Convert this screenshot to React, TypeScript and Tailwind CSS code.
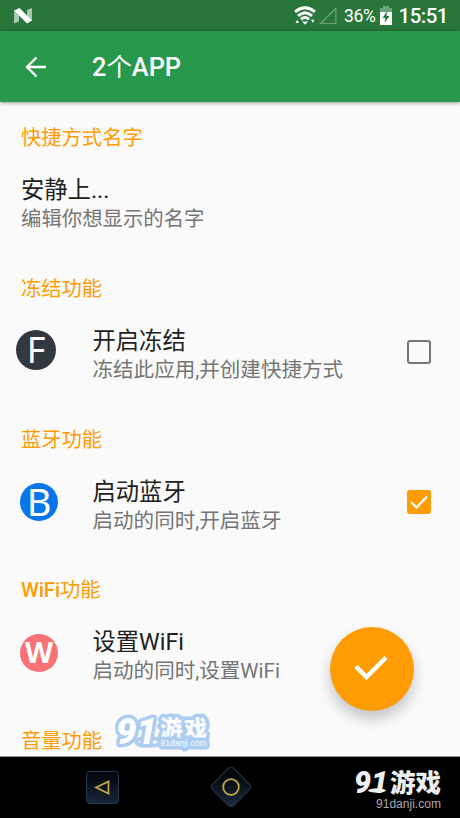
import { useState } from "react"
import clsx from "clsx"

interface Feature {
  id: string
  section: string
  sectionMedium?: boolean
  title: string
  summary: string
  badge: {
    letter: string
    className: string
    letterClassName: string
  }
  checkable?: boolean
}

const features: Feature[] = [
  {
    id: "freeze",
    section: "冻结功能",
    title: "开启冻结",
    summary: "冻结此应用,并创建快捷方式",
    badge: {
      letter: "F",
      className: "ml-4 mb-[11px] size-10 bg-[#323740]",
      letterClassName: "text-[36px] leading-[38px]",
    },
    checkable: true,
  },
  {
    id: "bluetooth",
    section: "蓝牙功能",
    title: "启动蓝牙",
    summary: "启动的同时,开启蓝牙",
    badge: {
      letter: "B",
      className: "ml-5 mb-[7px] size-[38px] bg-[#0676e8]",
      letterClassName: "mb-[2px] text-[38px] leading-[38px]",
    },
    checkable: true,
  },
  {
    id: "wifi",
    section: "WiFi功能",
    sectionMedium: true,
    title: "设置WiFi",
    summary: "启动的同时,设置WiFi",
    badge: {
      letter: "W",
      className: "ml-5 mb-[7px] size-[38px] bg-[#fb7276]",
      letterClassName: "mb-px text-[29px] leading-[38px] font-bold",
    },
  },
]

function StatusBar() {
  return (
    <div className="flex h-[31px] shrink-0 items-center bg-[#28763a] pl-[14px] pr-3 text-white">
      <svg width="18" height="16" viewBox="0 0 18 16" className="mt-px">
        <path d="M0 3l5 4v6.500l-5 2z" fill="#a9c8b0" />
        <path d="M18 0v13l-5-4v-7z" fill="#a9c8b0" />
        <path d="M0 2.500L5.500 0 18 12.500 13 15.500z" fill="#fff" />
      </svg>
      <div className="ml-auto flex items-center">
        <svg width="22" height="20" viewBox="0 0 22 20" fill="none" stroke="#fff" strokeWidth="2.900">
          <path d="M1 5.800Q11-2.400 21 5.800" />
          <path d="M4 9.800Q11 3.600 18 9.800" />
          <path d="M7 13.400Q11 9.600 15 13.400" />
          <path d="M8 15.400h6L11 18.800z" fill="#fff" stroke="none" />
          <path d="M1.500 17l1.800-3.200L5 17zM17 13.800h3.600L18.800 17z" fill="#fff" stroke="none" />
        </svg>
        <svg width="18" height="18" viewBox="0 0 18 18" fill="none" className="ml-[3px]">
          <path d="M1.500 16.500H16.900V1.200z" stroke="#6ea47a" strokeWidth="1.200" />
        </svg>
        <span className="ml-[7px] mt-[2px] text-[17.500px] leading-none tracking-[-0.300px]">36%</span>
        <svg width="12" height="19" viewBox="0 0 12 19" className="ml-[5px]">
          <path d="M3 0h6v2h3v4H0V2h3z" fill="#6ea47a" />
          <path d="M0 6h12v13H0z" fill="#fff" />
          <path d="M7.500 5L2.500 12h3L4.500 17 9.500 10h-3z" fill="#28763a" />
        </svg>
        <span className="ml-[6px] mt-[2px] text-[20.500px] font-medium leading-none tracking-[-0.500px]">15:51</span>
      </div>
    </div>
  )
}

function Checkbox({ checked, onChange, label }: { checked: boolean; onChange: () => void; label: string }) {
  return (
    <button
      role="checkbox"
      aria-checked={checked}
      aria-label={label}
      onClick={onChange}
      className={clsx(
        "mb-[7px] mr-[29px] flex size-6 items-center justify-center rounded-[3px]",
        checked ? "bg-[#ff9c04]" : "border-2 border-[#757575]"
      )}
    >
      {checked && (
        <svg width="20" height="16" viewBox="0 0 20 16" fill="none" stroke="#fafafa" strokeWidth="2.400">
          <path d="M2 8l5.500 5.500L18 2.500" />
        </svg>
      )}
    </button>
  )
}

function BrandMark({ blue }: { blue?: boolean }) {
  const outline = blue
    ? { stroke: "#acccf0", strokeWidth: 7, strokeLinejoin: "round" as const, paintOrder: "stroke" }
    : {}

  return (
    <svg width="98" height="42" viewBox="0 0 98 42" fill={blue ? "#fcfdff" : "#eee"} className="block overflow-visible">
      {/* Numerals, the second one standing on a small dish */}
      <g {...outline}>
        <ellipse cx={blue ? 36 : 32} cy={blue ? 31 : 24.5} rx={blue ? 10 : 9} ry="2.200" />
        <text
          x={blue ? 4 : 9}
          y={blue ? 33 : 26.5}
          fontSize={blue ? 37 : 31}
          fontWeight="900"
          fontStyle="italic"
          textLength={blue ? 41 : 34}
          lengthAdjust="spacingAndGlyphs"
          className="font-[Roboto,sans-serif]"
        >
          91
        </text>
      </g>
      <text
        x={blue ? 48 : 45}
        y={blue ? 25.5 : 26}
        fontSize={blue ? 23 : 25.5}
        fontWeight="900"
        className="font-['Noto_Sans_CJK_SC',sans-serif]"
        textLength={blue ? 47 : 51}
        {...outline}
      >
        游戏
      </text>
      <text
        x={blue ? 48.5 : 31}
        y={blue ? 34.5 : 41.5}
        fontSize={blue ? 9 : 12.5}
        textLength={blue ? 46 : 65}
        lengthAdjust="spacingAndGlyphs"
        fill={blue ? "#fcfdff" : "#aaa"}
        className="font-['Liberation_Sans',sans-serif]"
        {...outline}
      >
        91danji.com
      </text>
    </svg>
  )
}

export default function App() {
  const [checked, setChecked] = useState<Record<string, boolean>>({ freeze: false, bluetooth: true })

  const toggle = (id: string) => {
    setChecked((prev) => ({ ...prev, [id]: !prev[id] }))
  }

  return (
    <div className="relative flex h-[818px] w-[460px] flex-col overflow-hidden bg-[#fafafa] font-[Roboto,'Noto_Sans_CJK_SC',sans-serif]">
      <StatusBar />

      <header className="z-10 flex h-[71px] shrink-0 items-center bg-[#27984c] text-white shadow-[0_1px_4px_rgba(0,0,0,0.4)]">
        <button aria-label="返回" className="ml-[25px]">
          <svg width="22" height="22" viewBox="0 0 22 22" fill="none" stroke="#fff" strokeWidth="2.400">
            <path d="M21 11H2.500M11.500 1.500L2 11l9.500 9.500" />
          </svg>
        </button>
        <h1 className="ml-[45px] mt-[3px] text-[25.400px] font-medium leading-none">
          2<span className="font-normal">个</span>APP
        </h1>
      </header>

      {/* Settings list */}
      <main className="min-h-0 flex-1 overflow-hidden">
        <section className="h-[172px] pl-[21px] pt-[21px]">
          <h2 className="text-[20.300px] leading-[30px] text-[#ff9c04]">快捷方式名字</h2>
          <div className="mt-[22px]">
            <p className="text-[23.300px] leading-[30px] text-[#212121]">安静上...</p>
            <p className="text-[20.400px] leading-7 text-[#757575]">编辑你想显示的名字</p>
          </div>
        </section>

        {features.map((feature) => (
          <section key={feature.id} className="h-[150.700px]">
            <h2
              className={clsx(
                "pl-[21px] text-[20.300px] leading-[30px] text-[#ff9c04]",
                feature.sectionMedium && "tracking-[-0.100px]"
              )}
            >
              {feature.sectionMedium ? (
                <>
                  <span className="font-medium">WiFi</span>功能
                </>
              ) : (
                feature.section
              )}
            </h2>
            <div className="mt-[22px] flex items-center">
              <div className="w-[92.500px] shrink-0">
                <div
                  className={clsx(
                    "flex items-center justify-center rounded-full text-white",
                    feature.badge.className
                  )}
                >
                  <span className={clsx("font-['Noto_Sans',sans-serif]", feature.badge.letterClassName)}>
                    {feature.badge.letter}
                  </span>
                </div>
              </div>
              <div className="flex-1">
                <p className="text-[23.300px] leading-[30px] text-[#212121]">{feature.title}</p>
                <p className="text-[20.550px] leading-7 text-[#757575]">{feature.summary}</p>
              </div>
              {feature.checkable && (
                <Checkbox
                  checked={checked[feature.id]}
                  onChange={() => toggle(feature.id)}
                  label={feature.title}
                />
              )}
            </div>
          </section>
        ))}

        <h2 className="pl-[21px] text-[20.300px] leading-[30px] text-[#ff9c04]">音量功能</h2>
      </main>

      {/* Floating confirm button */}
      <button
        aria-label="确定"
        className="absolute left-[330px] top-[626.500px] flex size-[84px] items-center justify-center rounded-full bg-[#ff9c04] shadow-[0_8px_14px_rgba(0,0,0,0.22)]"
      >
        <svg width="34" height="26" viewBox="0 0 34 26" fill="none" stroke="#fff" strokeWidth="4.500" className="mb-px mr-[3px]">
          <path d="M2 11.500L12.500 22 32 2.500" />
        </svg>
      </button>

      <div className="absolute left-[112px] top-[711px]">
        <BrandMark blue />
      </div>

      <nav className="flex h-[62px] shrink-0 items-center border-t border-[#8f9492] bg-black pb-px">
        <button
          aria-label="后退"
          className="ml-[86px] flex size-[33px] items-center justify-center rounded-[4px] border border-[#263850] bg-linear-to-b from-[#03060b] to-[#182638]"
        >
          <svg width="17" height="15" viewBox="0 0 17 15" fill="none" stroke="#c4a54b" strokeWidth="1.800">
            <path d="M2 7.500L14.500 1.500v12z" />
          </svg>
        </button>
        <button aria-label="主页" className="ml-[90px]">
          <svg width="44" height="44" viewBox="0 0 44 44">
            <defs>
              <linearGradient id="home" x1="0" y1="0" x2="1" y2="1">
                <stop offset="0.200" stopColor="#03060b" />
                <stop offset="1" stopColor="#1c2d42" />
              </linearGradient>
            </defs>
            <rect x="7" y="7" width="30" height="30" rx="4" transform="rotate(45 22 22)" fill="url(#home)" stroke="#263850" />
            <circle cx="22" cy="22" r="7.800" fill="none" stroke="#c4a54b" strokeWidth="1.800" />
          </svg>
        </button>
        <div className="ml-auto mr-[17px]">
          <BrandMark />
        </div>
      </nav>
    </div>
  )
}
